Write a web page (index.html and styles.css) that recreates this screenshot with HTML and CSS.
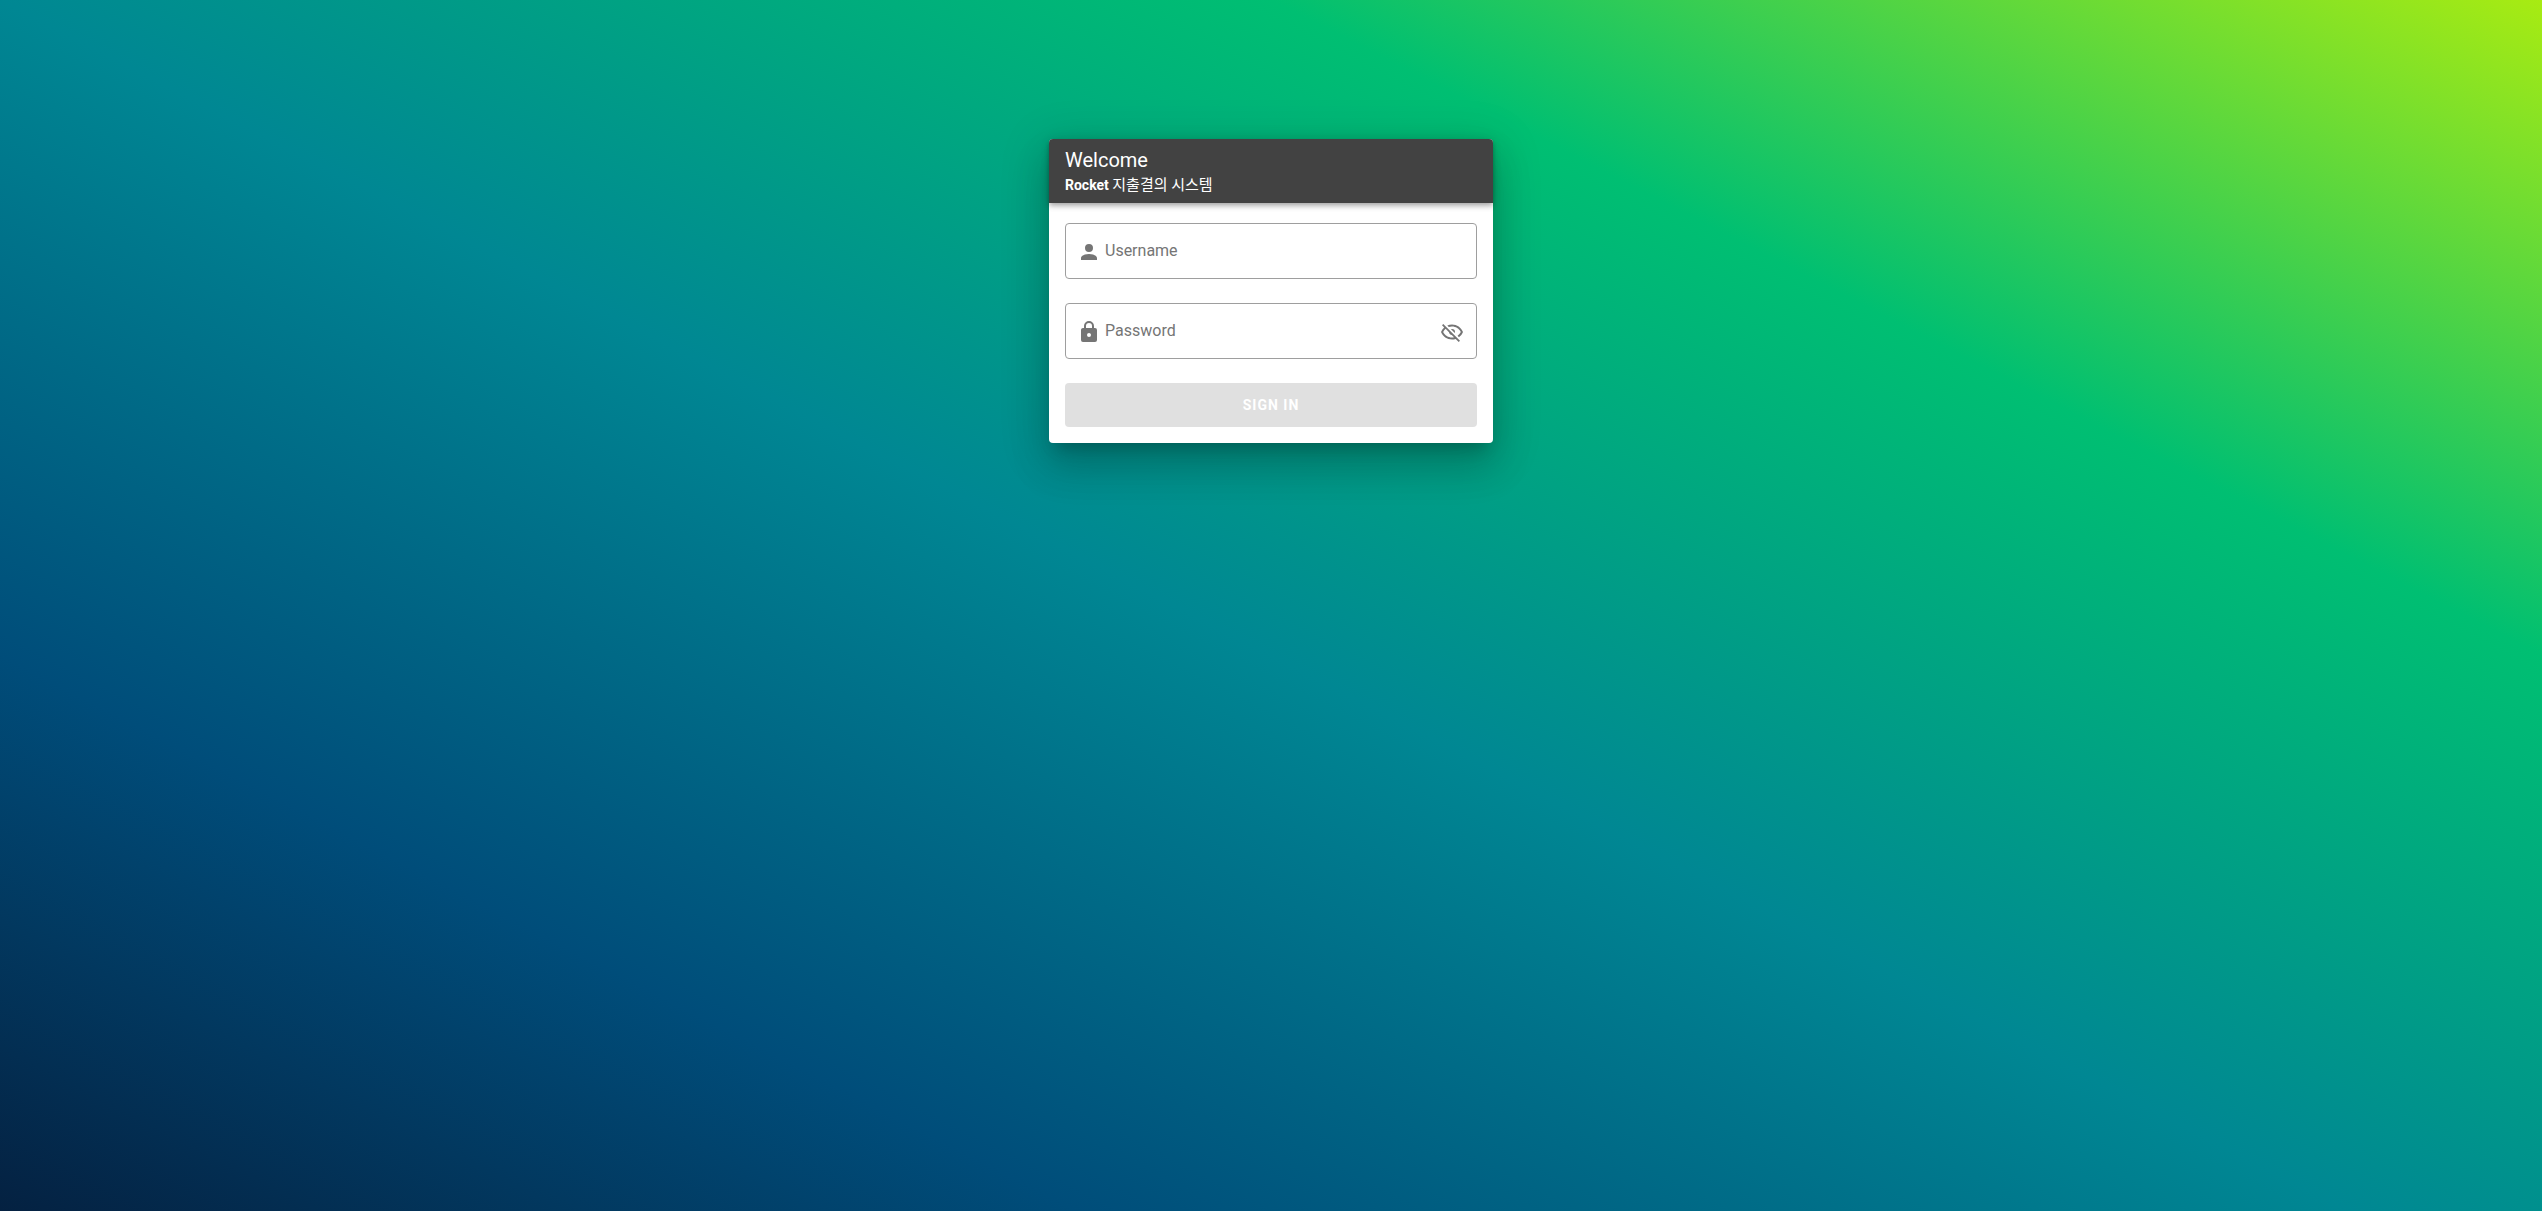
FILE: index.html
```html
<!DOCTYPE html>
<html lang="ko">
<head>
  <meta charset="utf-8">
  <meta name="viewport" content="width=device-width, initial-scale=1">
  <title>Rocket 지출결의 시스템</title>
  <link rel="stylesheet" href="styles.css">
</head>
<body class="page">
  <main class="card">
    <header class="card-header">
      <h1 class="title">Welcome</h1>
      <p class="subtitle"><strong class="brand">Rocket</strong> <span class="product">지출결의 시스템</span></p>
    </header>
    <form class="form">
      <div class="field">
        <label class="field-icon" for="username">
          <svg class="icon" viewBox="0 0 24 24" role="img" aria-label="Username"><path d="M12,4A4,4 0 0,1 16,8A4,4 0 0,1 12,12A4,4 0 0,1 8,8A4,4 0 0,1 12,4M12,14C16.42,14 20,15.79 20,18V20H4V18C4,15.79 7.58,14 12,14Z"/></svg>
        </label>
        <input class="field-input" id="username" type="text" placeholder="Username" autocomplete="username">
      </div>
      <div class="field">
        <label class="field-icon" for="password">
          <svg class="icon" viewBox="0 0 24 24" role="img" aria-label="Password"><path d="M12,17A2,2 0 0,0 14,15C14,13.89 13.1,13 12,13A2,2 0 0,0 10,15A2,2 0 0,0 12,17M18,8A2,2 0 0,1 20,10V20A2,2 0 0,1 18,22H6A2,2 0 0,1 4,20V10C4,8.89 4.9,8 6,8H7V6A5,5 0 0,1 12,1A5,5 0 0,1 17,6V8H18M12,3A3,3 0 0,0 9,6V8H15V6A3,3 0 0,0 12,3Z"/></svg>
        </label>
        <input class="field-input" id="password" type="password" placeholder="Password" autocomplete="current-password">
        <button class="icon-button" type="button" aria-label="Show password">
          <svg class="icon" viewBox="0 0 24 24" aria-hidden="true"><path d="M2,5.27L3.28,4L20,20.72L18.73,22L15.65,18.92C14.5,19.3 13.28,19.5 12,19.5C7,19.5 2.73,16.39 1,12C1.69,10.24 2.79,8.69 4.19,7.46L2,5.27M12,9A3,3 0 0,1 15,12C15,12.35 14.94,12.69 14.83,13L11,9.17C11.31,9.06 11.65,9 12,9M12,4.5C17,4.5 21.27,7.61 23,12C22.18,14.08 20.79,15.88 19,17.19L17.58,15.76C18.94,14.82 20.06,13.54 20.82,12C19.17,8.64 15.76,6.5 12,6.5C10.91,6.5 9.84,6.68 8.84,7L7.3,5.47C8.74,4.85 10.33,4.5 12,4.5M3.18,12C4.83,15.36 8.24,17.5 12,17.5C12.69,17.5 13.37,17.43 14,17.29L11.72,15C10.29,14.85 9.15,13.71 9,12.28L5.6,8.87C4.61,9.72 3.78,10.78 3.18,12Z"/></svg>
        </button>
      </div>
      <button class="submit" type="submit" disabled>SIGN IN</button>
    </form>
  </main>
</body>
</html>
```

FILE: styles.css
```css
*,
*::before,
*::after {
  box-sizing: border-box;
}

.page {
  display: flex;
  justify-content: center;
  align-items: flex-start;
  min-height: 100vh;
  margin: 0;
  padding: 139px 12px 24px;
  background: linear-gradient(to right top, #051937, #004d7a, #008793, #00bf72, #a8eb12) 0 0 / 100% calc(100% + 100px);
  font-family: Roboto, "Noto Sans CJK KR", sans-serif;
  font-size: 16px;
}

.card {
  width: 100%;
  max-width: 444px;
  border-radius: 4px;
  background: #fff;
  box-shadow:
    0 11px 15px -7px rgba(0, 0, 0, 0.2),
    0 24px 38px 3px rgba(0, 0, 0, 0.14),
    0 9px 46px 8px rgba(0, 0, 0, 0.12);
}

.card-header {
  padding: 8px 16px 6px;
  border-radius: 4px 4px 0 0;
  background: #424242;
  color: #fff;
  box-shadow:
    0 2px 4px -1px rgba(0, 0, 0, 0.2),
    0 4px 5px 0 rgba(0, 0, 0, 0.14),
    0 1px 10px 0 rgba(0, 0, 0, 0.12);
}

.title {
  margin: 0;
  font-size: 20px;
  font-weight: 400;
  line-height: 26px;
}

.subtitle {
  margin: 0;
  font-size: 14px;
  line-height: 24px;
}

.brand {
  font-weight: 700;
}

.product {
  font-size: 15px;
}

.form {
  display: flex;
  flex-direction: column;
  gap: 24px;
  padding: 20px 16px 16px;
}

.field {
  display: flex;
  align-items: center;
  height: 56px;
  padding: 2px 12px 0 11px;
  border: 1px solid #9e9e9e;
  border-radius: 4px;
}

.field:focus-within {
  border-color: #424242;
}

.field-icon {
  display: flex;
  margin-right: 4px;
}

.icon {
  display: block;
  width: 24px;
  height: 24px;
  fill: #757575;
}

.field-input {
  flex: 1;
  min-width: 0;
  height: 32px;
  margin: 0 0 4px;
  padding: 0;
  border: 0;
  outline: 0;
  background: transparent;
  color: rgba(0, 0, 0, 0.87);
  font: inherit;
}

.field-input::placeholder {
  color: #757575;
  opacity: 1;
}

.icon-button {
  padding: 0;
  border: 0;
  background: transparent;
  cursor: pointer;
}

.submit {
  height: 44px;
  padding: 0 20px;
  border: 0;
  border-radius: 4px;
  background: #424242;
  color: #fff;
  font-family: inherit;
  font-size: 14px;
  font-weight: 700;
  letter-spacing: 1px;
}

.submit:disabled {
  background: #e0e0e0;
}
```
